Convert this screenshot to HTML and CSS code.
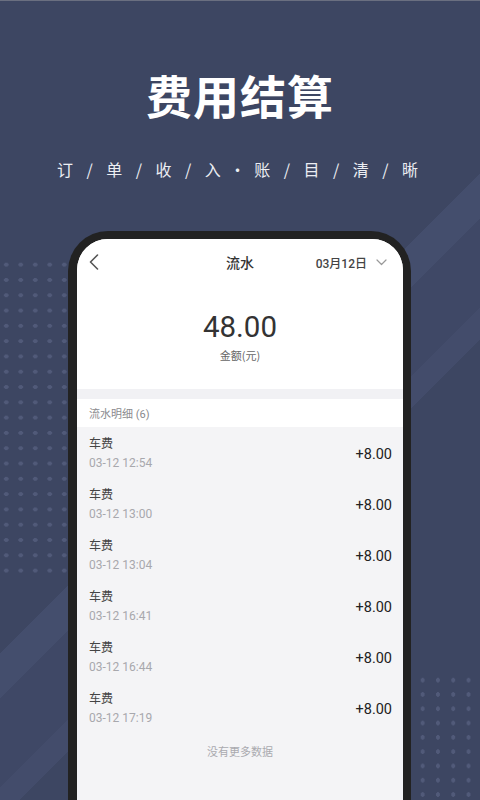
FILE: index.html
```html
<!DOCTYPE html>
<html lang="zh">
<head>
<meta charset="utf-8">
<link rel="stylesheet" href="styles.css">
</head>
<body>
<div class="page">
  <div class="dots dots-left"></div>
  <div class="dots dots-right"></div>
  <h1 class="title">费用结算</h1>
  <div class="subtitle">
    <span>订</span><span>/</span><span>单</span><span>/</span><span>收</span><span>/</span><span>入</span><span>·</span><span>账</span><span>/</span><span>目</span><span>/</span><span>清</span><span>/</span><span>晰</span>
  </div>
  <div class="phone">
    <div class="screen">
      <div class="nav">
        <svg class="back" width="12" height="18" viewBox="0 0 12 18"><path d="M9.5 2 L2.5 9 L9.5 16" fill="none" stroke="#555" stroke-width="1.6" stroke-linecap="round" stroke-linejoin="round"/></svg>
        <div class="nav-title">流水</div>
        <div class="nav-date">03月12日
          <svg width="11" height="7" viewBox="0 0 11 7"><path d="M1 1 L5.5 5.5 L10 1" fill="none" stroke="#999" stroke-width="1.2" stroke-linecap="round" stroke-linejoin="round"/></svg>
        </div>
      </div>
      <div class="summary">
        <div class="amount">48.00</div>
        <div class="amount-label">金额(元)</div>
      </div>
      <div class="band"></div>
      <div class="section-head">流水明细 (6)</div>
      <div class="list">
        <div class="row"><div class="info"><div class="name">车费</div><div class="time">03-12 12:54</div></div><div class="money">+8.00</div></div>
        <div class="row"><div class="info"><div class="name">车费</div><div class="time">03-12 13:00</div></div><div class="money">+8.00</div></div>
        <div class="row"><div class="info"><div class="name">车费</div><div class="time">03-12 13:04</div></div><div class="money">+8.00</div></div>
        <div class="row"><div class="info"><div class="name">车费</div><div class="time">03-12 16:41</div></div><div class="money">+8.00</div></div>
        <div class="row"><div class="info"><div class="name">车费</div><div class="time">03-12 16:44</div></div><div class="money">+8.00</div></div>
        <div class="row"><div class="info"><div class="name">车费</div><div class="time">03-12 17:19</div></div><div class="money">+8.00</div></div>
        <div class="nomore">没有更多数据</div>
      </div>
    </div>
  </div>
</div>
</body>
</html>
```

FILE: styles.css
```css
html, body {
  margin: 0;
  padding: 0;
}
body {
  width: 480px;
  height: 800px;
  overflow: hidden;
  font-family: Roboto, "Noto Sans CJK SC", sans-serif;
}
.page {
  position: relative;
  width: 480px;
  height: 800px;
  box-sizing: border-box;
  border-top: 1px solid #6a6f80;
  overflow: hidden;
  background: linear-gradient(135deg,
    #3d4662 0%, #3d4662 51%,
    #444e6d 51%, #444e6d 54.5%,
    #3f4866 54.5%, #3f4866 61.5%,
    #434c6b 61.5%, #434c6b 64%,
    #3d4662 64%, #3d4662 100%);
  display: flex;
  flex-direction: column;
  align-items: center;
}
.dots {
  position: absolute;
  background-image: radial-gradient(circle, #515a79 2px, transparent 2.4px);
}
.dots-left {
  left: -1px;
  top: 256px;
  width: 73px;
  height: 322px;
  background-size: 14.5px 15.3px;
}
.dots-right {
  left: 415px;
  top: 672px;
  width: 61px;
  height: 140px;
  background-size: 15.3px 14.3px;
}
.title {
  margin: 67px 0 0 0;
  font-family: "Noto Sans CJK SC", sans-serif;
  font-size: 46px;
  line-height: 52px;
  font-weight: 700;
  color: #ffffff;
  letter-spacing: 1px;
  position: relative;
}
.subtitle {
  margin-top: 39px;
  margin-left: -5px;
  display: grid;
  grid-template-columns: repeat(15, 24.65px);
  font-family: "Noto Sans CJK SC", sans-serif;
  font-size: 16px;
  line-height: 20px;
  color: #eceef3;
  position: relative;
}
.subtitle span {
  text-align: center;
}
.phone {
  margin-top: 52px;
  margin-left: -1px;
  width: 343px;
  flex: 1;
  box-sizing: border-box;
  background: #222222;
  border-radius: 40px 40px 0 0;
  padding: 8px 8px 0 9px;
  position: relative;
}
.screen {
  background: #f4f4f6;
  height: 100%;
  border-radius: 31px 31px 0 0;
  overflow: hidden;
}
.nav {
  height: 46px;
  background: #fff;
  display: flex;
  align-items: center;
  position: relative;
  padding: 0 16px 0 11px;
}
.back {
  display: block;
}
.nav-title {
  position: absolute;
  left: 0;
  right: 0;
  text-align: center;
  font-family: "Noto Sans CJK SC", sans-serif;
  font-size: 14px;
  font-weight: 500;
  color: #333;
  pointer-events: none;
}
.nav-date {
  margin-left: auto;
  display: flex;
  align-items: center;
  gap: 9px;
  font-size: 12px;
  font-weight: 500;
  color: #444;
}
.summary {
  background: #fff;
  height: 104px;
  display: flex;
  flex-direction: column;
  align-items: center;
}
.amount {
  margin-top: 24px;
  font-size: 29.5px;
  line-height: 36px;
  color: #333;
  font-weight: 400;
}
.amount-label {
  margin-top: 2px;
  font-family: "Noto Sans CJK SC", sans-serif;
  font-size: 11px;
  line-height: 16px;
  color: #666;
}
.band {
  height: 10px;
  background: #f1f1f4;
}
.section-head {
  height: 28px;
  background: #fff;
  display: flex;
  align-items: center;
  padding-left: 12px;
  font-size: 11px;
  color: #8a8a8e;
}
.list {
  background: #f4f4f6;
}
.row {
  height: 51px;
  box-sizing: border-box;
  padding: 8px 11px 0 12px;
  display: flex;
  align-items: center;
}
.info {
  align-self: flex-start;
  display: flex;
  flex-direction: column;
  gap: 4px;
}
.name {
  font-family: "Noto Sans CJK SC", sans-serif;
  font-size: 12px;
  line-height: 16px;
  color: #444;
}
.time {
  font-size: 12px;
  line-height: 16px;
  color: #a8a8ad;
}
.money {
  margin-left: auto;
  font-size: 14.5px;
  font-weight: 400;
  color: #222;
  margin-top: -5px;
}
.nomore {
  margin-top: 10px;
  text-align: center;
  font-family: "Noto Sans CJK SC", sans-serif;
  font-size: 11px;
  line-height: 16px;
  color: #aaaaaf;
}
```
